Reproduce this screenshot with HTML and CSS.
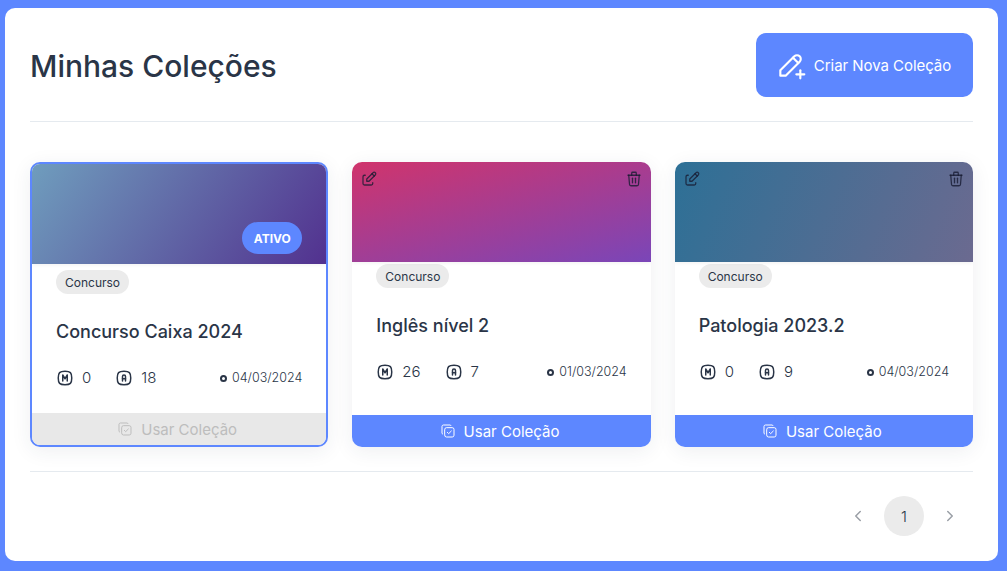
FILE: index.html
```html
<!DOCTYPE html>
<html lang="pt-BR">
<head>
<meta charset="utf-8">
<title>Minhas Coleções</title>
<link rel="stylesheet" href="styles.css">
</head>
<body>
<svg class="sprite" aria-hidden="true">
  <symbol id="i-pencil-plus" viewBox="0 0 24 24"><path d="M4 20h4l10.5 -10.5a2.828 2.828 0 1 0 -4 -4l-10.5 10.5v4"/><path d="M13.5 6.5l4 4"/><path d="M16 19h6"/><path d="M19 16v6"/></symbol>
  <symbol id="i-edit" viewBox="0 0 24 24"><path d="M7 7h-1a2 2 0 0 0 -2 2v9a2 2 0 0 0 2 2h9a2 2 0 0 0 2 -2v-1"/><path d="M20.385 6.585a2.1 2.1 0 0 0 -2.97 -2.97l-8.415 8.385v3h3l8.385 -8.415z"/><path d="M16 5l3 3"/></symbol>
  <symbol id="i-trash" viewBox="0 0 24 24"><path d="M4 7h16"/><path d="M10 11v6"/><path d="M14 11v6"/><path d="M5 7l1 12a2 2 0 0 0 2 2h8a2 2 0 0 0 2 -2l1 -12"/><path d="M9 7v-3a1 1 0 0 1 1 -1h4a1 1 0 0 1 1 1v3"/></symbol>
  <symbol id="i-copy-check" viewBox="0 0 24 24"><path d="M7 9.667a2.667 2.667 0 0 1 2.667 -2.667h8.666a2.667 2.667 0 0 1 2.667 2.667v8.666a2.667 2.667 0 0 1 -2.667 2.667h-8.666a2.667 2.667 0 0 1 -2.667 -2.667z"/><path d="M4.012 16.737a2 2 0 0 1 -1.012 -1.737v-10c0 -1.1 .9 -2 2 -2h10c.75 0 1.158 .385 1.5 1"/><path d="M11 14l2 2l4 -4"/></symbol>
  <symbol id="i-m" viewBox="0 0 24 24"><path d="M9 16v-8l3 5l3 -5v8"/><path d="M12 3c7.2 0 9 1.8 9 9s-1.8 9 -9 9s-9 -1.8 -9 -9s1.8 -9 9 -9z"/></symbol>
  <symbol id="i-a" viewBox="0 0 24 24"><path d="M10 16v-6a2 2 0 1 1 4 0v6"/><path d="M10 13h4"/><path d="M12 3c7.2 0 9 1.8 9 9s-1.8 9 -9 9s-9 -1.8 -9 -9s1.8 -9 9 -9z"/></symbol>
  <symbol id="i-left" viewBox="0 0 24 24"><path d="M15 6l-6 6l6 6"/></symbol>
  <symbol id="i-right" viewBox="0 0 24 24"><path d="M9 6l6 6l-6 6"/></symbol>
</svg>
<main class="panel">
  <header class="head">
    <h1 class="page-title">Minhas Coleções</h1>
    <button class="create-btn" type="button"><svg class="icon icon-create"><use href="#i-pencil-plus"/></svg><span>Criar Nova Coleção</span></button>
  </header>
  <section class="cards">
    <article class="card card-active">
      <div class="cover cover-a"><span class="badge">ATIVO</span></div>
      <div class="body">
        <span class="chip">Concurso</span>
        <h2 class="card-title">Concurso Caixa 2024</h2>
        <div class="stats">
          <span class="stat"><svg class="icon icon-stat"><use href="#i-m"/></svg>0</span>
          <span class="stat"><svg class="icon icon-stat"><use href="#i-a"/></svg>18</span>
          <span class="date"><i class="dot"></i>04/03/2024</span>
        </div>
      </div>
      <button class="use-btn" type="button"><svg class="icon icon-use"><use href="#i-copy-check"/></svg>Usar Coleção</button>
    </article>
    <article class="card">
      <div class="cover cover-b">
        <svg class="icon icon-tool tool-left"><use href="#i-edit"/></svg>
        <svg class="icon icon-tool tool-right"><use href="#i-trash"/></svg>
      </div>
      <div class="body">
        <span class="chip">Concurso</span>
        <h2 class="card-title">Inglês nível 2</h2>
        <div class="stats">
          <span class="stat"><svg class="icon icon-stat"><use href="#i-m"/></svg>26</span>
          <span class="stat"><svg class="icon icon-stat"><use href="#i-a"/></svg>7</span>
          <span class="date"><i class="dot"></i>01/03/2024</span>
        </div>
      </div>
      <button class="use-btn" type="button"><svg class="icon icon-use"><use href="#i-copy-check"/></svg>Usar Coleção</button>
    </article>
    <article class="card">
      <div class="cover cover-c">
        <svg class="icon icon-tool tool-left"><use href="#i-edit"/></svg>
        <svg class="icon icon-tool tool-right"><use href="#i-trash"/></svg>
      </div>
      <div class="body">
        <span class="chip">Concurso</span>
        <h2 class="card-title">Patologia 2023.2</h2>
        <div class="stats">
          <span class="stat"><svg class="icon icon-stat"><use href="#i-m"/></svg>0</span>
          <span class="stat"><svg class="icon icon-stat"><use href="#i-a"/></svg>9</span>
          <span class="date"><i class="dot"></i>04/03/2024</span>
        </div>
      </div>
      <button class="use-btn" type="button"><svg class="icon icon-use"><use href="#i-copy-check"/></svg>Usar Coleção</button>
    </article>
  </section>
  <nav class="pager">
    <span class="page-arrow"><svg class="icon icon-arrow"><use href="#i-left"/></svg></span>
    <span class="page-current">1</span>
    <span class="page-arrow"><svg class="icon icon-arrow"><use href="#i-right"/></svg></span>
  </nav>
</main>
</body>
</html>
```
FILE: styles.css
```css
* { box-sizing: border-box; }
html, body { height: 100%; margin: 0; overflow: hidden; }
body {
  padding: 8px 9px 10px 5px;
  background: #5d87ff;
  font-family: Inter, "Liberation Sans", sans-serif;
  color: #2a3547;
}
.sprite { display: none; }
.icon {
  display: block;
  flex: none;
  fill: none;
  stroke: currentColor;
  stroke-width: 2;
  stroke-linecap: round;
  stroke-linejoin: round;
}
.panel {
  height: 553px;
  padding: 25px;
  background: #fff;
  border-radius: 10px;
}
.head {
  display: flex;
  justify-content: space-between;
  align-items: center;
  padding-bottom: 24px;
  border-bottom: 1px solid #e5eaef;
}
.page-title {
  margin: 2px 0 0;
  font-size: 30px;
  font-weight: 500;
  line-height: 40px;
}
.create-btn {
  display: flex;
  align-items: center;
  justify-content: center;
  gap: 7px;
  width: 217px;
  height: 64px;
  padding: 0 3px 0 0;
  border: 0;
  border-radius: 10px;
  background: #5d87ff;
  color: #fff;
  font: 400 15px Inter, "Liberation Sans", sans-serif;
  letter-spacing: -.05px;
}
.icon-create { width: 32px; height: 32px; stroke-width: 1.6; }
.cards {
  display: grid;
  grid-template-columns: repeat(3, 1fr);
  gap: 24px;
  margin-top: 40px;
  height: 285px;
}
.card {
  position: relative;
  display: flex;
  flex-direction: column;
  overflow: hidden;
  background: #fff;
  border-radius: 10px;
  box-shadow: 0 4px 20px rgba(42, 53, 71, .08);
}
.card-active { border: 2px solid #5d87ff; }
.cover {
  position: relative;
  flex: none;
  height: 100px;
  box-shadow: 0 1px 4px rgba(0, 0, 0, .06);
}
.cover-a { background: linear-gradient(125deg, #6f9dbd, #52318f); }
.cover-b { background: linear-gradient(165deg, #d0346c, #7a46b8); }
.cover-c { background: linear-gradient(112deg, #2d7096, #6b6a90); }
.badge {
  position: absolute;
  right: 24px;
  bottom: 10px;
  display: flex;
  align-items: center;
  justify-content: center;
  width: 60px;
  height: 32px;
  border-radius: 16px;
  background: #5d87ff;
  color: #fff;
  font-size: 12px;
  font-weight: 700;
}
.icon-tool { position: absolute; top: 8px; width: 18px; height: 18px; stroke-width: 1.7; color: rgba(24, 28, 50, .8); }
.tool-left { left: 8px; }
.tool-right { right: 8px; }
.body {
  flex: 1;
  padding: 2px 24px 0;
}
.card-active .body { padding-top: 6px; }
.chip {
  display: flex;
  align-items: center;
  width: max-content;
  height: 24px;
  padding: 0 9px;
  border-radius: 12px;
  background: #ebebeb;
  font-size: 12px;
}
.card-title {
  margin: 24px 0 0;
  font-size: 18px;
  font-weight: 500;
  line-height: 27px;
}
.stats {
  display: flex;
  align-items: center;
  gap: 24px;
  margin-top: 24px;
  font-size: 15px;
  font-weight: 300;
  line-height: 18px;
}
.stat { display: flex; align-items: center; gap: 8px; }
.icon-stat { width: 18px; height: 18px; stroke-width: 2; }
.date {
  display: flex;
  align-items: center;
  gap: 5px;
  margin-left: auto;
  font-size: 12.5px;
}
.dot {
  width: 7px;
  height: 7px;
  border: 2px solid #2a3547;
  border-radius: 50%;
}
.use-btn {
  display: flex;
  align-items: center;
  justify-content: center;
  gap: 8px;
  flex: none;
  height: 32px;
  padding: 0 4px 0 0;
  border: 0;
  background: #5d87ff;
  color: #fff;
  font: 400 15px Inter, "Liberation Sans", sans-serif;
}
.card-active .use-btn { background: #e8e8e8; color: #bdbdbd; }
.icon-use { width: 16px; height: 16px; stroke-width: 1.5; }
.pager {
  display: flex;
  justify-content: flex-end;
  gap: 6px;
  margin-top: 24px;
  padding: 24px 3px 0 0;
  border-top: 1px solid #e5eaef;
}
.page-arrow, .page-current {
  display: flex;
  align-items: center;
  justify-content: center;
  width: 40px;
  height: 40px;
}
.page-arrow { color: #9a9fa6; }
.icon-arrow { width: 18px; height: 18px; }
.page-current {
  border-radius: 50%;
  background: #ebebeb;
  font-size: 15px;
  font-weight: 300;
}
```
